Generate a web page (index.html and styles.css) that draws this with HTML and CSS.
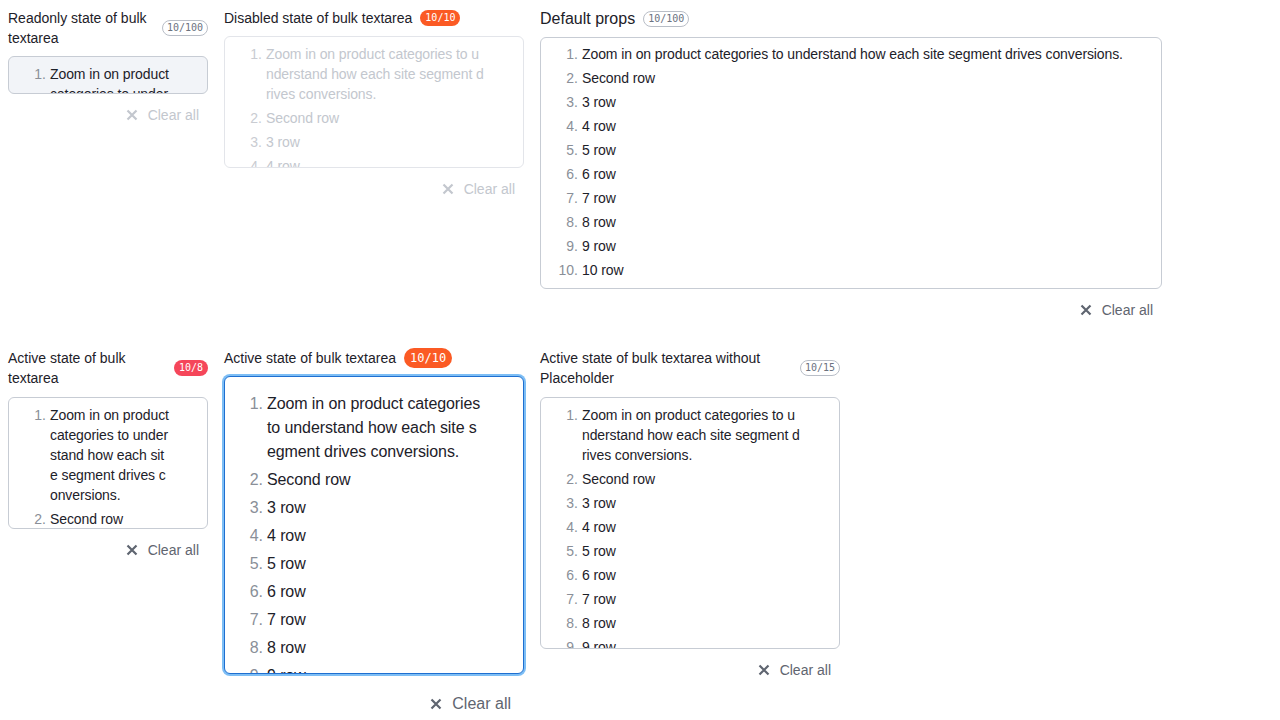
FILE: index.html
```html
<!DOCTYPE html>
<html>
<head>
<meta charset="utf-8">
<link rel="stylesheet" href="styles.css">
</head>
<body>
<div class="row">
  <section class="field w200">
    <div class="head"><span class="label">Readonly state of bulk textarea</span><span class="badge outline">10/100</span></div>
    <div class="box readonly h38">
      <ol class="list">
        <li><span class="num">1.</span><span class="txt">Zoom in on product categories to understand how each site segment drives conversions.</span></li>
        <li><span class="num">2.</span><span class="txt">Second row</span></li>
      </ol>
    </div>
    <div class="actions"><button class="clear disabled"><svg viewBox="0 0 16 16" class="x"><path d="M3.5 3.5l9 9M12.5 3.5l-9 9"/></svg>Clear all</button></div>
  </section>

  <section class="field w300">
    <div class="head"><span class="label">Disabled state of bulk textarea</span><span class="badge orange">10/10</span></div>
    <div class="box disabledbox h132">
      <ol class="list">
        <li><span class="num">1.</span><span class="txt">Zoom in on product categories to understand how each site segment drives conversions.</span></li>
        <li><span class="num">2.</span><span class="txt">Second row</span></li>
        <li><span class="num">3.</span><span class="txt">3 row</span></li>
        <li><span class="num">4.</span><span class="txt">4 row</span></li>
        <li><span class="num">5.</span><span class="txt">5 row</span></li>
      </ol>
    </div>
    <div class="actions"><button class="clear disabled"><svg viewBox="0 0 16 16" class="x"><path d="M3.5 3.5l9 9M12.5 3.5l-9 9"/></svg>Clear all</button></div>
  </section>

  <section class="field w622">
    <div class="head tall"><span class="label big">Default props</span><span class="badge outline">10/100</span></div>
    <div class="box h252 defaultbox">
      <ol class="list">
        <li><span class="num">1.</span><span class="txt">Zoom in on product categories to understand how each site segment drives conversions.</span></li>
        <li><span class="num">2.</span><span class="txt">Second row</span></li>
        <li><span class="num">3.</span><span class="txt">3 row</span></li>
        <li><span class="num">4.</span><span class="txt">4 row</span></li>
        <li><span class="num">5.</span><span class="txt">5 row</span></li>
        <li><span class="num">6.</span><span class="txt">6 row</span></li>
        <li><span class="num">7.</span><span class="txt">7 row</span></li>
        <li><span class="num">8.</span><span class="txt">8 row</span></li>
        <li><span class="num">9.</span><span class="txt">9 row</span></li>
        <li><span class="num">10.</span><span class="txt">10 row</span></li>
      </ol>
    </div>
    <div class="actions"><button class="clear"><svg viewBox="0 0 16 16" class="x"><path d="M3.5 3.5l9 9M12.5 3.5l-9 9"/></svg>Clear all</button></div>
  </section>
</div>

<div class="row row2">
  <section class="field w200">
    <div class="head"><span class="label">Active state of bulk textarea</span><span class="badge red">10/8</span></div>
    <div class="box h132 twoline">
      <ol class="list">
        <li><span class="num">1.</span><span class="txt">Zoom in on product categories to understand how each site segment drives conversions.</span></li>
        <li><span class="num">2.</span><span class="txt">Second row</span></li>
        <li><span class="num">3.</span><span class="txt">3 row</span></li>
      </ol>
    </div>
    <div class="actions"><button class="clear"><svg viewBox="0 0 16 16" class="x"><path d="M3.5 3.5l9 9M12.5 3.5l-9 9"/></svg>Clear all</button></div>
  </section>

  <section class="field w300">
    <div class="head"><span class="label">Active state of bulk textarea</span><span class="badge orange large">10/10</span></div>
    <div class="box focused large h298">
      <ol class="list">
        <li><span class="num">1.</span><span class="txt">Zoom in on product categories to understand how each site segment drives conversions.</span></li>
        <li><span class="num">2.</span><span class="txt">Second row</span></li>
        <li><span class="num">3.</span><span class="txt">3 row</span></li>
        <li><span class="num">4.</span><span class="txt">4 row</span></li>
        <li><span class="num">5.</span><span class="txt">5 row</span></li>
        <li><span class="num">6.</span><span class="txt">6 row</span></li>
        <li><span class="num">7.</span><span class="txt">7 row</span></li>
        <li><span class="num">8.</span><span class="txt">8 row</span></li>
        <li><span class="num">9.</span><span class="txt">9 row</span></li>
        <li><span class="num">10.</span><span class="txt">10 row</span></li>
      </ol>
    </div>
    <div class="actions big"><button class="clear large"><svg viewBox="0 0 16 16" class="x"><path d="M3.5 3.5l9 9M12.5 3.5l-9 9"/></svg>Clear all</button></div>
  </section>

  <section class="field w300">
    <div class="head"><span class="label">Active state of bulk textarea without Placeholder</span><span class="badge outline">10/15</span></div>
    <div class="box h252 twoline">
      <ol class="list">
        <li><span class="num">1.</span><span class="txt">Zoom in on product categories to understand how each site segment drives conversions.</span></li>
        <li><span class="num">2.</span><span class="txt">Second row</span></li>
        <li><span class="num">3.</span><span class="txt">3 row</span></li>
        <li><span class="num">4.</span><span class="txt">4 row</span></li>
        <li><span class="num">5.</span><span class="txt">5 row</span></li>
        <li><span class="num">6.</span><span class="txt">6 row</span></li>
        <li><span class="num">7.</span><span class="txt">7 row</span></li>
        <li><span class="num">8.</span><span class="txt">8 row</span></li>
        <li><span class="num">9.</span><span class="txt">9 row</span></li>
        <li><span class="num">10.</span><span class="txt">10 row</span></li>
      </ol>
    </div>
    <div class="actions"><button class="clear"><svg viewBox="0 0 16 16" class="x"><path d="M3.5 3.5l9 9M12.5 3.5l-9 9"/></svg>Clear all</button></div>
  </section>
</div>
</body>
</html>
```

FILE: styles.css
```css
* { box-sizing: border-box; }
html, body { margin: 0; padding: 0; background: #ffffff; }
body {
  padding: 8px;
  font-family: "Liberation Sans", Arial, sans-serif;
  font-size: 14px;
  line-height: 20px;
  color: #1d2129;
}
.row { display: flex; align-items: flex-start; gap: 16px; }
.row2 { margin-top: 22px; }
.field { display: flex; flex-direction: column; }
.w200 { width: 200px; }
.w300 { width: 300px; }
.w622 { width: 622px; }

.head { display: flex; align-items: center; gap: 8px; }
.head.tall { height: 22px; }
.label { font-size: 14px; line-height: 20px; color: #1d2129; }
.label.big { font-size: 16px; line-height: 22px; }

.badge {
  flex: none;
  font-family: "DejaVu Sans Mono", "Liberation Mono", monospace;
  font-size: 10px;
  line-height: 14px;
  padding: 1px 5px;
  border-radius: 999px;
  white-space: nowrap;
}
.badge.outline { border: 1px solid #b9bec7; color: #6b7280; padding: 0 4px; }
.badge.orange { background: #fb5a24; color: #ffffff; }
.badge.red { background: #f5465a; color: #ffffff; }
.badge.large { font-size: 12px; line-height: 16px; padding: 2px 6px; }

.box {
  margin-top: 8px;
  border: 1px solid #c7ccd4;
  border-radius: 6px;
  background: #ffffff;
  overflow: hidden;
  padding: 7px 38px 6px 13px;
  letter-spacing: -0.1px;
}
.box.twoline { margin-top: 9px; }
.box.defaultbox { margin-top: 7px; padding-top: 6px; padding-right: 30px; }
.h38 { height: 38px; }
.h132 { height: 132px; }
.h252 { height: 252px; }
.h298 { height: 298px; }
.box.readonly { background: #f2f4f8; border-color: #c7ccd4; }
.box.disabledbox { border-color: #e3e5ea; color: #c3c7ce; }
.box.disabledbox .num { color: #c9ccd2; }
.box.focused {
  border: 1px solid #1f6fd0;
  box-shadow: 0 0 0 2px #7dbef5;
  padding: 15px 40px 6px 14px;
}

.list { list-style: none; margin: 0; padding: 0; }
.list li {
  display: grid;
  grid-template-columns: 24px 1fr;
  column-gap: 4px;
  margin-bottom: 4px;
}
.num { text-align: right; color: #8a8f98; letter-spacing: 0; }
.txt { word-break: break-all; }
.box.large { font-size: 16px; line-height: 24px; }

.actions { display: flex; justify-content: flex-end; margin-top: 5px; }
.actions.big { margin-top: 12px; }
.clear {
  display: flex;
  align-items: center;
  gap: 8px;
  height: 32px;
  padding: 0 9px 0 8px;
  border: 0;
  background: transparent;
  font-family: "Liberation Sans", Arial, sans-serif;
  font-size: 14px;
  color: #5f6570;
  cursor: pointer;
}
.clear .x { width: 16px; height: 16px; fill: none; stroke: currentColor; stroke-width: 2.2; }
.clear.disabled { color: #c3c7ce; }
.clear.large { font-size: 16px; height: 36px; padding: 0 13px 0 12px; }
```
